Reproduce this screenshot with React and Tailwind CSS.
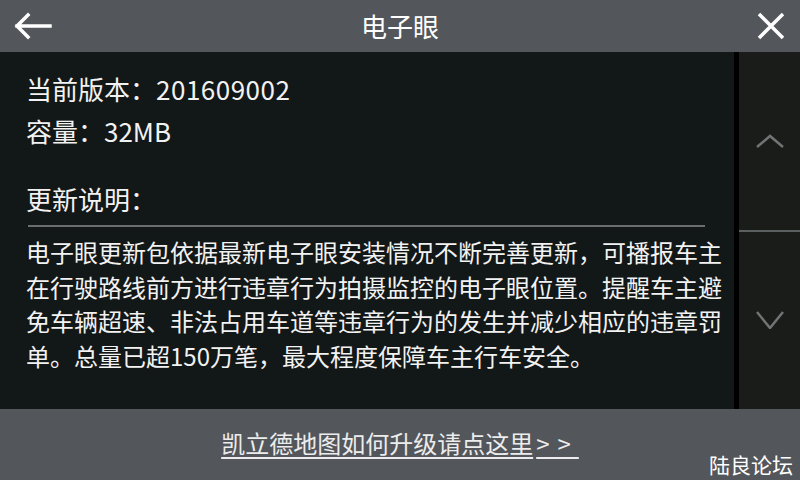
import React from 'react';

const font = { fontFamily: '"Noto Sans CJK SC", "Noto Sans", sans-serif' };

const bodyLines = [
  '电子眼更新包依据最新电子眼安装情况不断完善更新，可播报车主',
  '在行驶路线前方进行违章行为拍摄监控的电子眼位置。提醒车主避',
  '免车辆超速、非法占用车道等违章行为的发生并减少相应的违章罚',
  '单。总量已超150万笔，最大程度保障车主行车安全。',
];

const App = () => {
  return (
    <div className="w-[800px] h-[480px] flex flex-col bg-[#121718] text-[#f2f2f2] overflow-hidden" style={font}>
      {/* Header */}
      <div className="h-[52px] bg-[#53565b] flex items-center justify-between px-[14px] shrink-0">
        <svg className="w-[38px] h-[30px]" viewBox="0 0 38 30" fill="none" stroke="#ffffff" strokeWidth="3.5" strokeLinecap="square">
          <path d="M3 15h33M14 4L3 15l11 11" />
        </svg>
        <h1 className="text-[26px] leading-none text-white -ml-[8px]">电子眼</h1>
        <svg className="w-[30px] h-[30px]" viewBox="0 0 30 30" fill="none" stroke="#ffffff" strokeWidth="3.5">
          <path d="M3 3l24 24M27 3L3 27" />
        </svg>
      </div>

      {/* Main */}
      <div className="flex-1 flex min-h-0">
        <div className="w-[734px] pl-[26px] pt-[16px]">
          <p className="text-[26px] leading-[42px]">当前版本：<span className="tracking-[0.5px]">201609002</span></p>
          <p className="text-[26px] leading-[42px]">容量：32MB</p>
          <p className="text-[26px] leading-[42px] mt-[26px]">更新说明：</p>
          <div className="h-[2px] w-[677px] ml-[2px] mt-[5px] bg-[#6b6e6e]" />
          <div className="mt-[8px] text-[24px] leading-[34.7px]">
            {bodyLines.map((line) => (
              <p key={line} className="whitespace-nowrap">{line}</p>
            ))}
          </div>
        </div>
        <div className="w-[5px] bg-black" />
        <div className="flex-1 flex flex-col bg-[#1a1c19]">
          <div className="flex-1 flex items-center justify-center">
            <svg className="w-[28px] h-[14px]" viewBox="0 0 28 14" fill="none" stroke="#717474" strokeWidth="2.5">
              <path d="M1 13L14 2l13 11" />
            </svg>
          </div>
          <div className="h-[2px] bg-[#5c5f5f]" />
          <div className="flex-1 flex items-center justify-center">
            <svg className="w-[28px] h-[18px]" viewBox="0 0 28 18" fill="none" stroke="#717474" strokeWidth="2.5">
              <path d="M1 1l13 16L27 1" />
            </svg>
          </div>
        </div>
      </div>

      {/* Footer */}
      <div className="h-[71px] bg-[#53565b] relative flex items-start justify-center pt-[19px] shrink-0">
        <span className="text-[24px] leading-[30px] underline underline-offset-[4px] decoration-2 text-[#ececec]">
          凯立德地图如何升级请点这里<span className="pl-[3px] tracking-[8px]">&gt;&gt;</span>
        </span>
        <span className="absolute right-[7px] bottom-[4px] text-[21px] leading-[24px] text-white">陆良论坛</span>
      </div>
    </div>
  );
};

export default App;
